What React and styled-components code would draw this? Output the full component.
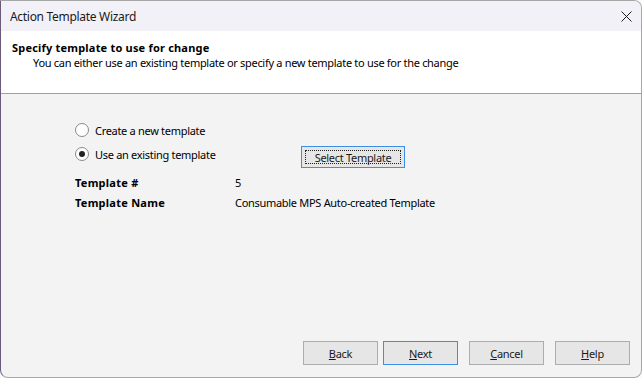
import styled, { createGlobalStyle } from "styled-components";

const Global = createGlobalStyle`
    html, body {
        margin: 0;
        padding: 0;
        background: #fafafa;
    }
    body {
        font-family: "Noto Sans", "Open Sans", sans-serif;
        font-size: 11px;
        letter-spacing: -0.3px;
        color: #000;
    }
`;

const Window = styled.div`
    box-sizing: border-box;
    display: flex;
    flex-direction: column;
    width: 642px;
    height: 378px;
    background: #f3f3f3;
    border: 1px solid #a7a7a7;
    border-left-color: #6b5a7a;
    border-radius: 0 8px 8px 8px;
    overflow: hidden;
`;

const TitleBar = styled.div`
    display: flex;
    align-items: center;
    justify-content: space-between;
    height: 30px;
    padding: 0 0 0 9px;
    background: #f3f1f8;
    font-size: 12px;
    color: #1a1a1a;
`;

const CloseButton = styled.div`
    display: flex;
    align-items: center;
    justify-content: center;
    width: 30px;
    height: 30px;
`;

const Header = styled.div`
    height: 63px;
    padding: 9px 0 0 11px;
    box-sizing: border-box;
    background: #fff;
    border-bottom: 1px solid #a0a0a0;
`;

const HeaderTitle = styled.div`
    font-weight: bold;
    letter-spacing: 0.2px;
    line-height: 15px;
`;

const HeaderText = styled.div`
    padding-left: 21px;
    line-height: 15px;
`;

const Body = styled.div`
    flex: 1;
    padding: 28px 0 0 74px;
`;

const RadioRow = styled.div`
    display: flex;
    align-items: flex-start;
    height: 24px;
`;

const RadioLabel = styled.label`
    display: flex;
    align-items: center;
    gap: 6px;
    width: 226px;
    height: 16px;
`;

const Radio = styled.span`
    box-sizing: border-box;
    display: flex;
    align-items: center;
    justify-content: center;
    width: 14px;
    height: 14px;
    border-radius: 50%;
    border: 1px solid #8a8a8a;
    background: #fff;
    &::after {
        content: "";
        display: ${(p) => (p.$checked ? "block" : "none")};
        width: 6px;
        height: 6px;
        border-radius: 50%;
        background: #222;
    }
`;

const Button = styled.button`
    box-sizing: border-box;
    width: ${(p) => p.$width || 75}px;
    height: ${(p) => p.$height || 24}px;
    padding: 0;
    font-family: inherit;
    font-size: 11px;
    letter-spacing: -0.3px;
    color: #1a1a1a;
    background: #e6e6e6;
    border: 1px solid ${(p) => (p.$focus ? "#3d8ee6" : "#adadad")};
    display: flex;
    align-items: center;
    justify-content: center;
`;

const FocusRect = styled.span`
    box-sizing: border-box;
    display: flex;
    align-items: center;
    justify-content: center;
    width: calc(100% - 6px);
    height: calc(100% - 6px);
    border: 1px dotted #222;
`;

const Info = styled.div`
    display: grid;
    grid-template-columns: 160px 1fr;
    row-gap: 5px;
    margin-top: 5px;
    line-height: 15px;
`;

const InfoLabel = styled.div`
    font-weight: bold;
    letter-spacing: 0.25px;
`;

const Footer = styled.div`
    display: flex;
    justify-content: flex-end;
    gap: 11px;
    padding: 0 11px 12px 0;
`;

const ButtonPair = styled.div`
    display: flex;
    gap: 5px;
`;

const U = styled.span`
    text-decoration: underline;
`;

export default function App() {
    return (
        <>
            <Global />
            <Window>
                <TitleBar>
                    <span>Action Template Wizard</span>
                    <CloseButton>
                        <svg width="11" height="11" viewBox="0 0 11 11">
                            <path d="M0.5 0.5L10.5 10.5M10.5 0.5L0.5 10.5" stroke="#1a1a1a" strokeWidth="1" />
                        </svg>
                    </CloseButton>
                </TitleBar>
                <Header>
                    <HeaderTitle>Specify template to use for change</HeaderTitle>
                    <HeaderText>You can either use an existing template or specify a new template to use for the change</HeaderText>
                </Header>
                <Body>
                    <RadioRow>
                        <RadioLabel>
                            <Radio />
                            Create a new template
                        </RadioLabel>
                    </RadioRow>
                    <RadioRow>
                        <RadioLabel>
                            <Radio $checked />
                            Use an existing template
                        </RadioLabel>
                        <Button as="span" $width={104} $height={22} $focus>
                            <FocusRect>Select Template</FocusRect>
                        </Button>
                    </RadioRow>
                    <Info>
                        <InfoLabel>Template #</InfoLabel>
                        <div>5</div>
                        <InfoLabel>Template Name</InfoLabel>
                        <div>Consumable MPS Auto-created Template</div>
                    </Info>
                </Body>
                <Footer>
                    <ButtonPair>
                        <Button><span><U>B</U>ack</span></Button>
                        <Button $focus><span><U>N</U>ext</span></Button>
                    </ButtonPair>
                    <Button><span><U>C</U>ancel</span></Button>
                    <Button><span><U>H</U>elp</span></Button>
                </Footer>
            </Window>
        </>
    );
}
